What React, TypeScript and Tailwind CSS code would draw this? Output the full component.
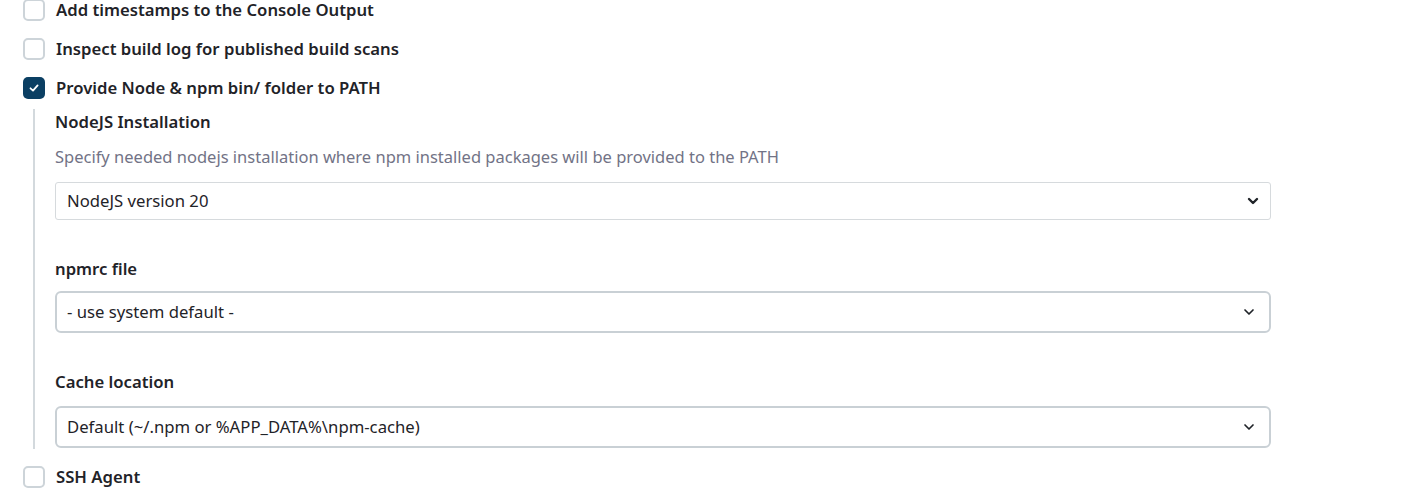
const font = { fontFamily: '"Noto Sans", "Open Sans", sans-serif' };

function Check({ checked, label }: { checked?: boolean; label: string }) {
  return (
    <label className="flex h-[39px] items-center gap-[11px] pl-[23px]">
      {checked ? (
        <span className="flex h-[22px] w-[22px] items-center justify-center rounded-[5px] bg-[#0b3f63]">
          <svg width="12" height="12" viewBox="0 0 12 12" fill="none">
            <path d="M2.5 6.3 L5 8.6 L9.6 3.4" stroke="white" strokeWidth="1.8" strokeLinecap="round" strokeLinejoin="round" />
          </svg>
        </span>
      ) : (
        <span className="h-[22px] w-[22px] rounded-[5px] border-2 border-[#cdd4d9] bg-white" />
      )}
      <span className="text-[16.7px] font-semibold text-[#1f2328]">{label}</span>
    </label>
  );
}

function Chevron({ bold }: { bold?: boolean }) {
  return (
    <svg width="14" height="14" viewBox="0 0 14 14" fill="none">
      <path d="M3 5 L7 9 L11 5" stroke="#1f2328" strokeWidth={bold ? 2.4 : 1.7} strokeLinecap="round" strokeLinejoin="round" />
    </svg>
  );
}

function Select({ value, native }: { value: string; native?: boolean }) {
  return native ? (
    <div className="flex h-[38px] w-[1216px] items-center justify-between rounded-[3px] border border-[#d6dadd] bg-white pl-[11px] pr-[10px] text-[16.7px] text-[#1f2328]">
      <span>{value}</span>
      <Chevron bold />
    </div>
  ) : (
    <div className="flex h-[42px] w-[1216px] items-center justify-between rounded-[6px] border-2 border-[#c9d0d5] bg-white pl-[10px] pr-[13px] text-[16.7px] text-[#1f2328]">
      <span>{value}</span>
      <Chevron />
    </div>
  );
}

export default function App() {
  return (
    <div className="h-[504px] w-[1414px] overflow-hidden bg-white" style={font}>
      <div className="-mt-[10px]">
        <Check label="Add timestamps to the Console Output" />
        <Check label="Inspect build log for published build scans" />
        <Check checked label="Provide Node & npm bin/ folder to PATH" />
        <div className="ml-[33px] mt-[2px] border-l-2 border-[#d3d9dd] pl-[20px]">
          <div className="mt-[2px] flex h-[26px] items-center text-[16.7px] font-semibold text-[#1f2328]">NodeJS Installation</div>
          <div className="mt-[10px] flex h-[24px] items-center text-[16.5px] text-[#727386]">
            Specify needed nodejs installation where npm installed packages will be provided to the PATH
          </div>
          <div className="mt-[13px]">
            <Select native value="NodeJS version 20" />
          </div>
          <div className="mt-[36px] flex h-[26px] items-center text-[16.7px] font-semibold text-[#1f2328]">npmrc file</div>
          <div className="mt-[9px]">
            <Select value="- use system default -" />
          </div>
          <div className="mt-[36px] flex h-[26px] items-center text-[16.7px] font-semibold text-[#1f2328]">Cache location</div>
          <div className="mt-[11px] pb-[1px]">
            <Select value="Default (~/.npm or %APP_DATA%\npm-cache)" />
          </div>
        </div>
        <div className="mt-[8px]">
          <Check label="SSH Agent" />
        </div>
      </div>
    </div>
  );
}
